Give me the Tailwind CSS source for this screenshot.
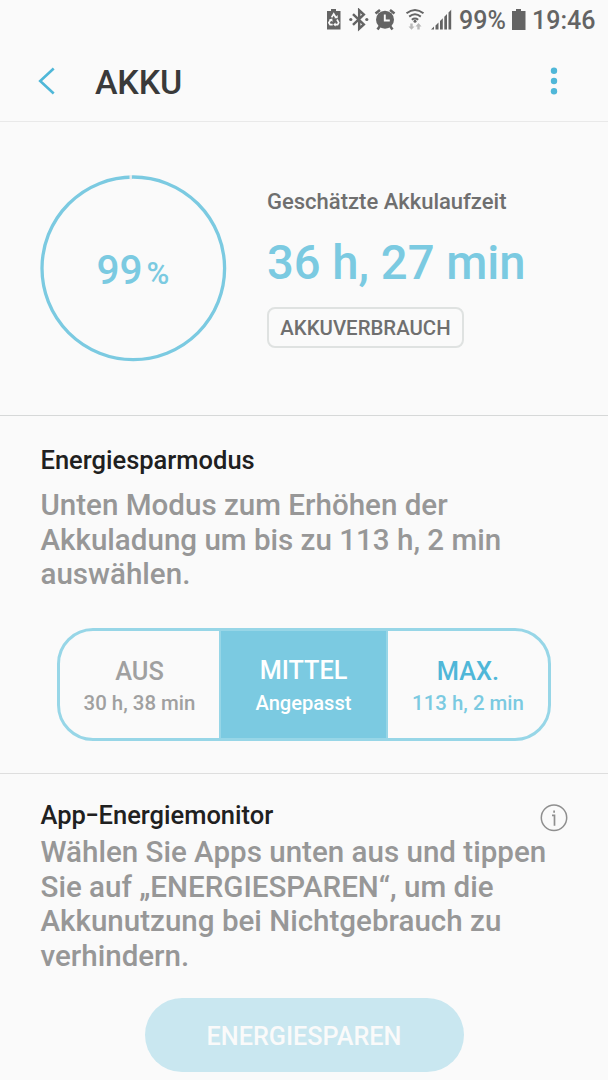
<!DOCTYPE html>
<html lang="de">
<head>
<meta charset="utf-8">
<meta name="viewport" content="width=device-width">
<title>Akku</title>
<script src="https://cdn.jsdelivr.net/npm/@tailwindcss/browser@4"></script>
</head>
<body class="h-[1080px] w-[608px] overflow-hidden bg-[#fafafa] font-['Roboto',sans-serif] font-medium">

<!-- Status bar -->
<div class="flex h-10 items-center pl-[326px] text-[25px] leading-10 text-[#646464] whitespace-nowrap">
  <svg class="h-6 w-4 shrink-0" viewBox="326 8 16 24">
    <path fill="#646464" d="M331 9h5v2h4.500v18.500h-13.500V11h4z"/>
    <g fill="none" stroke="#fafafa" stroke-width="1.700">
      <path d="M331.600 17.400l2.100-3.400 2.300 3.800"/>
      <path d="M337 19.500l1.700 3.200-1.100 1.900h-2.800"/>
      <path d="M332.700 24.600h-2.600l-1.200-1.900 1.900-3.200"/>
    </g>
    <path fill="#fafafa" d="M334.300 18.200h3.400v-3.100zM335.600 22.500v4l-2.400-2zM329 19.400l3.300-.9.300 3.200z"/>
  </svg>
  <svg class="ml-1.5 h-6 w-[22px] shrink-0" viewBox="348 8 22 24">
    <path fill="none" stroke="#646464" stroke-width="2.500" d="M353 14.200l10.800 10.200-4.600 4.300V10.300l4.600 4.300-10.800 10.200"/>
    <circle cx="350.800" cy="19.500" r="1.600" fill="#646464"/><circle cx="366.800" cy="19.500" r="1.600" fill="#646464"/>
  </svg>
  <svg class="ml-1 h-6 w-[22px] shrink-0" viewBox="374 8 22 24">
    <circle cx="385" cy="19.700" r="9" fill="#646464"/>
    <path fill="none" stroke="#646464" stroke-width="2.600" d="M375.500 13.500l4.500-3.500M394.500 13.500l-4.500-3.500M380 26l-2.500 3.500M390 26l2.500 3.500"/>
    <path fill="none" stroke="#fafafa" stroke-width="1.900" d="M384.800 14.500v6h5"/>
  </svg>
  <svg class="ml-2 h-6 w-[22px] shrink-0" viewBox="404 8 22 24">
    <g fill="none" stroke="#646464" stroke-width="2">
      <path d="M406.500 13.300q8.500-6.600 17 0"/><path d="M409.200 16.600q5.800-4.600 11.600 0"/><path d="M411.800 19.700q3.200-2.400 6.400 0"/>
    </g>
    <circle cx="415" cy="21.200" r="1.500" fill="#646464"/>
    <path fill="#b9b9b9" d="M410.300 23.500h2.400v3h1.800l-3 3.300-3-3.300h1.800zM417.300 29.500h2.400v-3h1.800l-3-3.500-3 3.500h1.800z"/>
  </svg>
  <svg class="ml-1 h-6 w-[22px] shrink-0" viewBox="430 8 22 24">
    <path fill="#646464" d="M431 29.500l3-3v3zM435.500 25.500l3-3v7h-3zM440 21l2.800-2.800v11.300H440zM444.300 16.700l2.700-2.700v15.500h-2.700zM448.500 12.500l2.700-2.700v19.700h-2.700z"/>
  </svg>
  <span class="ml-[7px] w-[52px] shrink-0 pt-0.5">99%</span>
  <svg class="h-6 w-4 shrink-0" viewBox="511 8 16 24"><path fill="#646464" d="M516 9h5v2h4.500v19h-13.500V11h4z"/></svg>
  <span class="ml-[5px] pt-0.5">19:46</span>
</div>

<!-- Title bar -->
<header class="flex h-[82px] items-center border-b border-[#e9e9e9] pl-[37px]">
  <svg class="h-8 w-5" viewBox="37 65 20 32"><path fill="none" stroke="#4fb7d8" stroke-width="2.600" d="M53.700 68.500L40.200 81l13.500 12.500"/></svg>
  <h1 class="ml-[38px] grow text-[34px] leading-[41px] tracking-[-0.2px] text-[#3a3a3a] pt-[4px]">AKKU</h1>
  <svg class="mr-11 h-8 w-5" viewBox="544 65 20 32" fill="#4fb7d8"><circle cx="554" cy="70.700" r="3.200"/><circle cx="554" cy="81" r="3.200"/><circle cx="554" cy="91.200" r="3.200"/></svg>
</header>

<!-- Remaining runtime -->
<section class="flex h-[294px] border-b border-[#d6d8d8] pl-10">
  <div class="mt-[53px] grid h-[188px] w-[188px] shrink-0 place-items-center text-[#7bcae1]">
    <svg class="col-start-1 row-start-1 h-[188px] w-[188px]" viewBox="40 175 188 188">
      <circle cx="133.300" cy="268.300" r="91.300" fill="none" stroke="#7bcae1" stroke-width="3.300"/>
      <path stroke="#ececec" stroke-width="2.400" d="M130.700 175v4.500"/>
    </svg>
    <div class="col-start-1 row-start-1 flex items-baseline pt-[5px] pr-[2px] leading-[48px]">
      <span class="text-[40.500px]">99</span><span class="ml-[4px] text-[31px]">%</span>
    </div>
  </div>
  <div class="ml-[39px] whitespace-nowrap">
    <p class="mt-[67px] text-[22px] leading-[26px] text-[#6f6f6f]">Geschätzte Akkulaufzeit</p>
    <p class="mt-[20px] text-[47.200px] leading-[56px] text-[#7bcae1]">36 h, 27 min</p>
    <button class="mt-[16px] h-[41px] w-[197px] rounded-[8px] border-2 border-[#dfe2e1] text-[20.400px] leading-[24px] text-[#6f6f6f]">AKKUVERBRAUCH</button>
  </div>
</section>

<!-- Power saving mode -->
<section class="h-[358px] border-b border-[#dedede] pt-[29px]">
  <h2 class="pl-[40.500px] text-[25.500px] leading-[30px] text-[#202020]">Energiesparmodus</h2>
  <p class="mt-[13px] pl-[40.500px] text-[29.550px] leading-[34.700px] text-[#979797] whitespace-nowrap">Unten Modus zum Erhöhen der<br>Akkuladung um bis zu 113 h, 2 min<br>auswählen.</p>
  <div class="ml-[57px] mt-[36px] flex h-[113px] w-[494px] overflow-hidden rounded-[36px] border-[3px] border-[#97d6e7] text-center">
    <div class="w-[159px] pt-[25px] text-[#a0a0a0]">
      <div class="text-[25.400px] leading-[30px]">AUS</div><div class="mt-[5px] text-[20.400px] leading-6">30 h, 38 min</div>
    </div>
    <div class="w-[169px] border-x-2 border-[#97d6e7] bg-[#7bcae1] pt-[25px] text-white">
      <div class="text-[25.200px] leading-[30px]">MITTEL</div><div class="mt-[5px] text-[20.100px] leading-6">Angepasst</div>
    </div>
    <div class="w-[160px] pt-[25px] text-[#7bcae1]">
      <div class="text-[25.400px] leading-[30px] text-[#4fb7d8]">MAX.</div><div class="mt-[5px] text-[20.400px] leading-6">113 h, 2 min</div>
    </div>
  </div>
</section>

<!-- App power monitor -->
<section class="pt-[26px]">
  <div class="flex h-[35px] justify-between pl-[40.500px] pr-10">
    <h2 class="text-[25.500px] leading-[30px] text-[#202020]">App<span class="mx-[2px] inline-block -translate-y-px scale-x-150">-</span>Energiemonitor</h2>
    <svg class="mt-1 h-7 w-7" viewBox="540 804 28 28"><circle cx="554" cy="817.800" r="12.700" fill="none" stroke="#8f8f8f" stroke-width="1.500"/><path fill="none" stroke="#8f8f8f" stroke-width="1.700" d="M552 815.300h2.500v10.500M554.100 810.500v2.300"/></svg>
  </div>
  <p class="pl-[40.500px] text-[29.550px] leading-[34.700px] text-[#979797] whitespace-nowrap">Wählen Sie Apps unten aus und tippen<br>Sie auf „ENERGIESPAREN“, um die<br>Akkunutzung bei Nichtgebrauch zu<br>verhindern.</p>
  <button class="mx-auto mt-[24px] block h-[74px] w-[319px] rounded-full bg-[#c9e7f0] pt-[4px] text-[25.200px] leading-[30px] text-[#fafafa]">ENERGIESPAREN</button>
</section>
</body>
</html>
